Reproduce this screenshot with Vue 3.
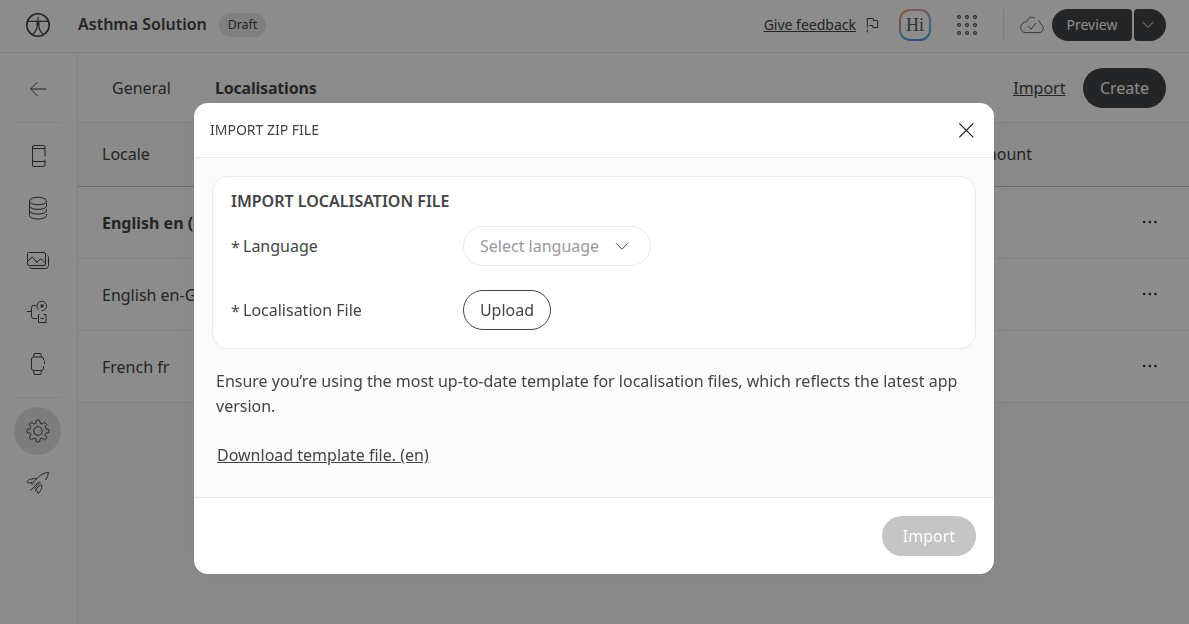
<script setup>
const locales = [
  { name: 'English en (default)', main: true },
  { name: 'English en-GB', main: false },
  { name: 'French fr', main: false },
]
const navIcons = ['phone', 'data', 'media', 'flow', 'watch']

// Eight-toothed cog outline around (12, 12)
const cog = Array.from({ length: 8 }, (_, i) => {
  const at = (r, deg) => {
    const a = ((i * 45 + deg - 90) * Math.PI) / 180
    return `${(12 + r * Math.cos(a)).toFixed(2)} ${(12 + r * Math.sin(a)).toFixed(2)}`
  }
  return `${i ? 'L' : 'M'}${at(8.4, -14)}L${at(10.8, -9)}Q${at(11.4, 0)} ${at(10.8, 9)}L${at(8.4, 14)}Q${at(7.6, 22.5)} ${at(8.4, 31)}`
}).join('') + 'Z'
</script>

<template>
  <div class="app">
    <header class="topbar">
      <svg class="logo" viewBox="0 0 26 26">
        <circle cx="13" cy="13" r="11.2" stroke-width="1.6" />
        <path d="M2.5 9.400h21M13 5v8.500M12.100 9.500v5.200q-.3 3.500-4 7.600M13.900 9.500v5.200q.3 3.500 4 7.600" stroke-width="1.2" />
      </svg>
      <h1>Asthma Solution</h1>
      <span class="draft">Draft</span>
      <div class="spacer"></div>
      <a class="feedback">Give feedback</a>
      <svg class="flag" viewBox="0 0 14 18"><path d="M1.3 11.500V2.500h6v2h4.400v7H6.800v-2H3.500M1.300 13.400v3" /></svg>
      <div class="avatar"><span>Hi</span></div>
      <svg class="dots" viewBox="0 0 24 24">
        <template v-for="y in 3" :key="y">
          <circle v-for="x in 3" :key="x" :cx="x * 8 - 4" :cy="y * 8 - 4" r="1.4" />
        </template>
      </svg>
      <i class="split"></i>
      <svg class="cloud" viewBox="0 0 24 18">
        <path d="M14.800 1.700Q9-.6 6.700 5.600Q.8 7 .7 11.500Q1 16.400 5.500 16.600H19Q23.300 16.200 23.300 12Q23.200 9 20.300 7.600Q20.200 5.300 18 4M8 10.200l3 3 5-6.200" />
      </svg>
      <button class="preview">Preview</button>
      <button class="more"><svg viewBox="0 0 12 8"><path d="M.8 1.200 6 6.400l5.200-5.200" /></svg></button>
    </header>

    <div class="below">
      <nav class="side">
        <div class="back"><svg viewBox="0 0 24 24"><path d="M20.500 12H4.500M11.500 5l-7 7 7 7" /></svg></div>
        <hr />
        <div class="group">
          <div v-for="n in navIcons" :key="n" class="item">
            <svg viewBox="0 0 24 24">
              <path v-if="n === 'phone'" d="M19 12.500V3q0-1.500-1.500-1.500h-9.500Q6.500 1.500 6.500 3v18q0 1.500 1.500 1.500h9.500q1.500 0 1.500-1.500v-5.500M6.500 4.500h12.500M6.500 17.500h12.500" />
              <path v-else-if="n === 'data'" d="M3.500 5C3.500 0 20.500 0 20.500 5S3.500 10 3.500 5v14.500c0 4.700 17 4.700 17 0v-1.500M3.500 10c0 4.500 17 4.500 17 0v-3M3.500 14.700c0 4.500 17 4.500 17 0v-1.500" />
              <path v-else-if="n === 'media'" d="M2.500 4.500h15.500q1.500 0 1.500 1.500v10q0 1.500-1.500 1.500H3q-1.500 0-1.500-1.500V5.500q0-1 1-1M2 13l4.300-4 5.200 6M9.500 13l1.500 1 4-3.300 4 4M21.500 7.500q1 .5 1 2v8q0 3-3 3H6q-2 0-2-1.500" />
              <template v-else-if="n === 'flow'">
                <path d="M1 11.500h4.500M10 5.500H7.500q-2 0-2 2v9q0 2 2 2H11M12.500 9.500a4.800 4.800 0 1 1 3 1.300M13.500 14.500h-1v8h7.500v-8h-2.500M14.500 18.500h3.500" />
                <circle class="fill" cx="16" cy="6" r="1.7" />
              </template>
              <path v-else d="M17.500 8V7q0-2-2-2h-8q-2 0-2 2v9.500q0 2 2 2h8q2 0 2-2v-2.500M7.500 5l.7-3.500h6.600l.7 3.500M7.500 18.500l.7 4h6.600l.7-4M18.500 8.500v3.500" />
            </svg>
          </div>
        </div>
        <hr />
        <div class="group">
          <div class="item active"><svg viewBox="0 0 24 24"><path :d="cog" /><circle cx="12" cy="12" r="4.3" /></svg></div>
          <div class="item"><svg viewBox="0 0 24 24"><path d="M19.500 9Q22.500 5 22.500 1.500Q16 1.500 10.500 8L6 12.500M11 7.800Q3 7 1 10.700Q1.200 12 2.500 12l3.500-.5v2.500M4.500 19.500l8.500-9M8.500 17.500l6-6.500M16 14q.2 5-3.500 8.500-1.500 0-1.500-3l-2-.5 6.500-6" /></svg></div>
        </div>
      </nav>

      <main class="main">
        <div class="toolbar">
          <span class="tab">General</span>
          <span class="tab on">Localisations</span>
          <div class="spacer"></div>
          <a class="import-link">Import</a>
          <button class="create">Create</button>
        </div>
        <div class="thead"><span>Locale</span><span class="amount">Amount</span></div>
        <div v-for="l in locales" :key="l.name" class="row" :class="{ primary: l.main }">
          <span>{{ l.name }}</span>
          <svg viewBox="0 0 16 4"><circle cx="2.200" cy="2" r="1.25" /><circle cx="7.900" cy="2" r="1.25" /><circle cx="13.500" cy="2" r="1.25" /></svg>
        </div>
      </main>
    </div>

    <div class="mask">
      <section class="modal">
        <div class="mhead">
          <span>IMPORT ZIP FILE</span>
          <svg viewBox="0 0 16 16"><path d="M1.300 1.300l14 14M15.300 1.300l-14 14" /></svg>
        </div>
        <div class="mbody">
          <div class="card">
            <h2>IMPORT LOCALISATION FILE</h2>
            <div class="field">
              <label><b>*</b>Language</label>
              <div class="select">Select language<svg viewBox="0 0 14 9"><path d="M1 1.200 7 7.200l6-6" /></svg></div>
            </div>
            <div class="field">
              <label><b>*</b>Localisation File</label>
              <button class="upload">Upload</button>
            </div>
          </div>
          <p>Ensure you’re using the most up-to-date template for localisation files, which reflects the latest app version.</p>
          <a class="download">Download template file. (en)</a>
        </div>
        <div class="mfoot"><button class="submit">Import</button></div>
      </section>
    </div>
  </div>
</template>

<style>
body { margin: 0; overflow: hidden; }
</style>

<style scoped>
* { box-sizing: border-box; }
.app {
  height: 624px;
  display: flex;
  flex-direction: column;
  overflow: hidden;
  background: #fff;
  color: #434446;
  font: 16px/24px "Noto Sans", sans-serif;
}
svg { display: block; flex: none; fill: none; stroke: currentColor; stroke-width: 1; }
svg .fill { fill: currentColor; stroke: none; }
button { flex: none; padding: 0; border: 0; font: inherit; color: inherit; background: none; }
a { text-decoration: underline; white-space: nowrap; }
.spacer { flex: 1; }

.topbar { flex: none; height: 53px; padding: 0 23px 3px 25px; display: flex; align-items: center; border-bottom: 1px solid #ebebeb; }
.logo { width: 26px; height: 26px; }
h1 { margin: 0 12px 2px 27px; width: 129px; font-size: 16px; font-weight: 600; line-height: 24px; white-space: nowrap; }
.draft { width: 47px; height: 24px; border-radius: 12px; background: #e9e9e9; font-size: 12.4px; line-height: 24px; text-align: center; }
.feedback { font-size: 14px; }
.flag { width: 14px; height: 18px; margin-left: 10px; }
.avatar { width: 32px; height: 32px; margin-left: 19px; padding: 2px; border-radius: 11px; background: conic-gradient(#e8a0b8 0deg, #c89ad0 50deg, #62bfd0 95deg, #5b93ea 150deg, #5b8ff0 190deg, #5fc2d5 230deg, #e083b8 275deg, #eba050 315deg, #e8a0b8 360deg); }
.avatar span { display: block; height: 28px; border-radius: 9px; background: #fff; color: #5a5a5c; text-align: center; font: 18px/29px "Liberation Serif", serif; }
.dots { width: 24px; height: 24px; margin-left: 24px; stroke-width: 1.1; }
.split { width: 1px; height: 32px; margin: 0 16px 0 24px; background: #e4e4e4; }
.cloud { width: 24px; height: 18px; margin-right: 8px; color: #66676a; }
.preview, .more { height: 32px; background: #434446; color: #fff; font-size: 14px; }
.preview { width: 80px; border-radius: 16px 4px 4px 16px; }
.more { width: 32px; margin-left: 2px; border-radius: 4px 16px 16px 4px; display: grid; place-items: center; }
.more svg { width: 12px; height: 8px; margin-right: 4px; }

.below { flex: 1; min-height: 0; display: flex; }
.side { width: 78px; flex: none; border-right: 1px solid #ebebeb; }
.side svg { width: 24px; height: 24px; }
.side hr { width: 47px; height: 1px; margin: 0 0 0 14px; border: 0; background: #ebebeb; }
.back { height: 69px; padding: 24px 0 0 26px; }
.group { padding: 7px 0 7px 12px; }
.item { width: 51px; height: 52px; display: flex; align-items: center; padding-left: 14px; }
.item.active { width: 47px; height: 48px; margin: 2px; padding-left: 12px; border-radius: 50%; background: #e4e4e4; }

.main { flex: 1; min-width: 0; background: #fbfbfb; }
.toolbar { height: 70px; padding: 0 23px 0 34px; display: flex; align-items: center; background: #fff; border-bottom: 1px solid #ebebeb; }
.tab.on { margin-left: 44px; font-weight: 700; letter-spacing: -.2px; }
.create { width: 83px; height: 40px; margin-left: 17.500px; border-radius: 20px; background: #434446; color: #fff; }
.thead { height: 64px; padding: 0 157px 2px 24px; display: flex; align-items: center; justify-content: space-between; border-bottom: 1px solid #c6c6c6; }
.row { height: 72px; padding: 0 31px 0 24px; display: flex; align-items: center; justify-content: space-between; background: #fff; border-bottom: 1px solid #ebebeb; }
.row.primary { font-weight: 700; }
.row svg { width: 16px; height: 4px; margin-bottom: 1px; fill: #333; stroke: none; }

.mask { position: fixed; inset: 0; padding-top: 103px; background: rgba(0, 0, 0, .45); }
.modal { width: 800px; height: 471px; margin: 0 195px 0 194px; display: flex; flex-direction: column; border-radius: 14px; overflow: hidden; background: #fff; box-shadow: 0 4px 32px rgba(0, 0, 0, .05); }
.mhead { height: 55px; flex: none; padding: 0 20px 0 16px; display: flex; align-items: center; justify-content: space-between; border-bottom: 1px solid #e9e9e9; font-size: 14px; }
.mhead svg { width: 16px; height: 16px; color: #111; stroke-width: 1.1; }
.mbody { flex: 1; padding: 18px; background: #fbfbfb; }
.card { height: 173px; padding: 12px 18px; border: 1px solid #ebebeb; border-radius: 16px; background: #fff; }
h2 { margin: 0 0 13px; font-size: 16px; line-height: 24px; font-weight: 600; }
.field { height: 40px; margin-bottom: 24px; display: flex; align-items: center; }
.field label { width: 232px; display: flex; }
.field b { width: 12px; padding-top: 1px; margin-bottom: -1px; font-weight: 400; }
.select { width: 188px; height: 40px; padding: 0 21px 0 16px; display: flex; align-items: center; justify-content: space-between; border: 1px solid #e9e9e9; border-radius: 20px; color: #98999e; }
.select svg { width: 14px; height: 9px; color: #434446; }
.upload { width: 88px; height: 40px; border: 1px solid #434446; border-radius: 20px; }
p { margin: 20px 0 0 4px; line-height: 25px; }
.download { display: block; width: max-content; margin: 24px 0 0 5px; }
.mfoot { height: 77px; flex: none; padding: 18px; display: flex; justify-content: flex-end; border-top: 1px solid #e9e9e9; }
.submit { width: 94px; height: 40px; border-radius: 20px; background: #c5c5c5; color: #fff; }
</style>
